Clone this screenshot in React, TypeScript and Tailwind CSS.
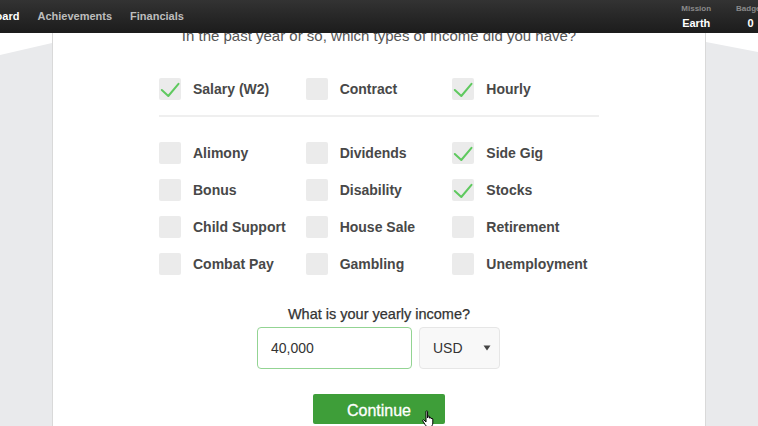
import React from "react";

const F = { fontFamily: '"Liberation Sans", Arial, sans-serif' };

type Item = { label: string; checked?: boolean };

const top: Item[] = [
  { label: "Salary (W2)", checked: true },
  { label: "Contract" },
  { label: "Hourly", checked: true },
];

const rest: Item[] = [
  { label: "Alimony" },
  { label: "Dividends" },
  { label: "Side Gig", checked: true },
  { label: "Bonus" },
  { label: "Disability" },
  { label: "Stocks", checked: true },
  { label: "Child Support" },
  { label: "House Sale" },
  { label: "Retirement" },
  { label: "Combat Pay" },
  { label: "Gambling" },
  { label: "Unemployment" },
];

function Check({ item }: { item: Item }) {
  return (
    <div className="flex items-center h-[22px] gap-[12px]">
      <div className="w-[22px] h-[22px] bg-[#ebebeb] rounded-[2px] shrink-0">
        {item.checked && (
          <svg width="22" height="22" viewBox="0 0 22 22">
            <path d="M2.8 12 L9.3 18 L19.5 5.8" fill="none" stroke="#5fc95f" strokeWidth="2" strokeLinecap="round" strokeLinejoin="round" />
          </svg>
        )}
      </div>
      <span className="text-[14px] font-bold text-[#484848] whitespace-nowrap">{item.label}</span>
    </div>
  );
}

export default function App() {
  return (
    <div className="relative w-[758px] h-[426px] overflow-hidden bg-[#e9eaec]" style={F}>
      <svg className="absolute left-0 top-0" width="758" height="426">
        <polygon points="0,0 758,0 758,52 706,42 379,-20 52,43 0,55" fill="#ffffff" />
      </svg>

      <div className="relative ml-[52px] w-[654px] h-[426px] bg-white border-x border-[#d9d9d9] flex flex-col items-center pt-[27px]">
        <div className="text-[15px] leading-[18px] text-[#555]">
          In the past year or so, which types of income did you have?
        </div>

        <div className="w-[440px] mt-[33px]">
          <div className="grid grid-cols-3">
            {top.map((i) => (
              <Check key={i.label} item={i} />
            ))}
          </div>
          <div className="h-[2px] bg-[#efefef] mt-[15px]" />
          <div className="grid grid-cols-3 gap-y-[15px] mt-[25px]">
            {rest.map((i) => (
              <Check key={i.label} item={i} />
            ))}
          </div>
        </div>

        <div className="mt-[30px] text-[14.5px] leading-[18px] text-[#333]" style={{ WebkitTextStroke: "0.25px #333" }}>
          What is your yearly income?
        </div>

        <div className="flex gap-[7px] mt-[4px] ml-[-1px]">
          <div className="w-[155px] h-[42px] border border-[#93d493] rounded-[4px] flex items-center pl-[13px] text-[14px] text-[#333]">
            40,000
          </div>
          <div className="w-[81px] h-[42px] border border-[#e6e6e6] bg-[#f8f8f8] rounded-[4px] flex items-center justify-between pl-[13px] pr-[8px] text-[14px] text-[#333]">
            <span>USD</span>
            <svg width="8" height="6" viewBox="0 0 8 6">
              <path d="M0.5 0.5 L7.5 0.5 L4 5.5 Z" fill="#444" />
            </svg>
          </div>
        </div>

        <div
          className="mt-[25px] w-[132px] h-[30px] bg-[#3e9e39] rounded-[2px] flex items-center justify-center pt-[3px] text-white text-[16px]"
          style={{ WebkitTextStroke: "0.3px #fff" }}
        >
          Continue
        </div>
      </div>

      <div className="absolute left-0 top-0 w-[758px] h-[33px] bg-gradient-to-b from-[#333333] to-[#1c1c1c] flex items-center">
        <div className="flex gap-[18px] ml-[-38px] text-[11px] font-bold">
          <span className="text-white">Dashboard</span>
          <span className="text-[#bdbdbd]">Achievements</span>
          <span className="text-[#bdbdbd]">Financials</span>
        </div>
        <div className="ml-auto mr-[-7px] flex gap-[25px]">
          <div className="flex flex-col items-center">
            <span className="text-[8px] font-bold text-[#8a8a8a] leading-[10px]">Mission</span>
            <span className="text-[11px] font-bold text-white leading-[14px] mt-[2px]">Earth</span>
          </div>
          <div className="flex flex-col items-center">
            <span className="text-[8px] font-bold text-[#8a8a8a] leading-[10px]">Badges</span>
            <span className="text-[11px] font-bold text-white leading-[14px] mt-[2px]">0</span>
          </div>
        </div>
      </div>

      <svg className="absolute left-[421px] top-[410px]" width="16" height="18" viewBox="0 0 16 18">
        <path
          d="M5 1.5 C5 0.7 6.6 0.7 6.6 1.5 L6.6 8 L7 6.6 C7 5.8 8.6 5.8 8.6 6.6 L8.6 8.2 C8.6 7.4 10.2 7.4 10.2 8.2 L10.2 9 C10.2 8.2 11.8 8.2 11.8 9 L11.8 13 C11.8 15 10.8 16.5 9.5 16.5 L6.5 16.5 C5.5 16.5 4.8 15.8 4.2 14.8 L1.8 11 C1.3 10.2 2.3 9.3 3 10 L5 12 Z"
          fill="#ffffff"
          stroke="#000"
          strokeWidth="1"
          strokeLinejoin="round"
        />
      </svg>
    </div>
  );
}
